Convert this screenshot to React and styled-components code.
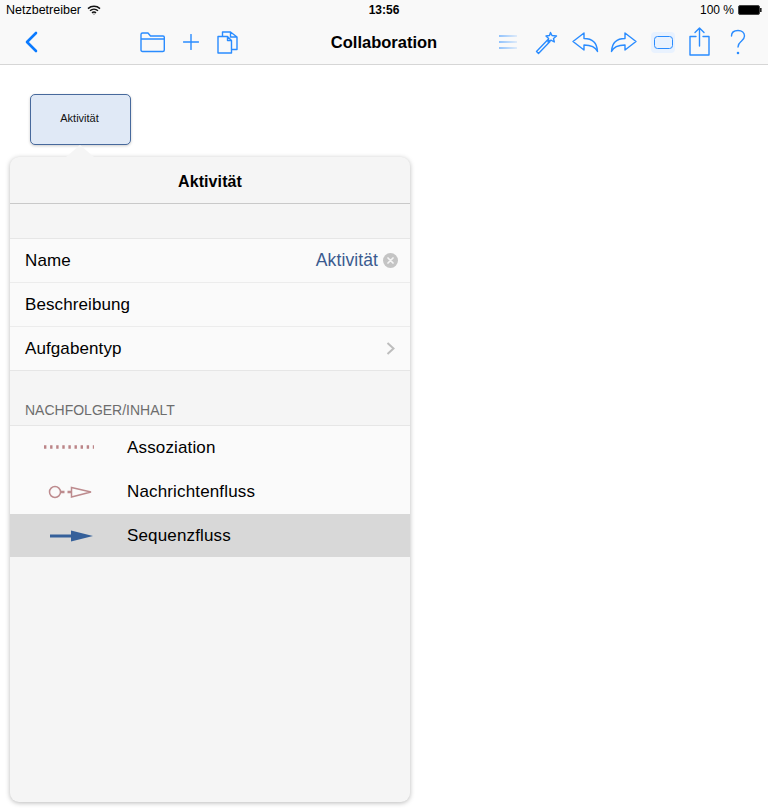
import React from 'react';
import styled, { createGlobalStyle } from 'styled-components';

const GlobalStyle = createGlobalStyle`
  html, body {
    margin: 0;
    background: #fff;
    font-family: "Liberation Sans", Arial, sans-serif;
    color: #000;
  }
`;

const Page = styled.div`
  position: relative;
  width: 768px;
  height: 808px;
  overflow: hidden;
  background: #fff;
`;

const Header = styled.header`
  height: 64px;
  background: #f9f9f9;
  border-bottom: 1px solid #d6d6d6;
  box-sizing: content-box;
`;

const StatusBar = styled.div`
  height: 20px;
  padding: 0 6px;
  display: grid;
  grid-template-columns: 1fr auto 1fr;
  align-items: center;
  font-size: 12.5px;
`;

const StatusLeft = styled.div`
  display: flex;
  align-items: center;
  gap: 6px;
`;

const StatusTime = styled.div`
  font-size: 12px;
  font-weight: 700;
`;

const StatusRight = styled.div`
  display: flex;
  justify-content: flex-end;
  align-items: center;
  gap: 4px;
  font-size: 12px;
`;

const Toolbar = styled.div`
  height: 44px;
  display: grid;
  grid-template-columns: 1fr auto 1fr;
  align-items: center;
`;

const ToolLeft = styled.div`
  display: flex;
  align-items: center;
  padding-left: 24px;
`;

const ToolGroup = styled.div`
  display: flex;
  align-items: center;
  gap: ${({ $gap }) => $gap}px;
  margin-left: ${({ $offset }) => $offset || 0}px;
`;

const ToolRight = styled.div`
  display: flex;
  align-items: center;
  justify-content: flex-end;
  gap: 14px;
  padding-right: 22px;
`;

const Title = styled.div`
  font-size: 16.5px;
  font-weight: 700;
`;

const Icon = styled.svg`
  display: block;
  flex: none;
  fill: none;
  stroke: #2a8cff;
  stroke-width: 1.4;
  stroke-linecap: round;
  stroke-linejoin: round;
`;

const BackIcon = styled(Icon)`
  stroke: #0a7aff;
  stroke-width: 2.6;
`;

const ListIcon = styled(Icon)`
  margin-right: 4px;
  stroke-linecap: butt;
  stroke-width: 1.2;
`;

const UndoIcon = styled(Icon)`
  margin-right: -3px;
`;

const ShareIcon = styled(Icon)`
  margin-top: -2px;
`;

const HelpIcon = styled(Icon)`
  margin-left: 6px;
`;

const RectToggle = styled.div`
  width: 24px;
  height: 21px;
  display: flex;
  align-items: center;
  justify-content: center;
  background: #e9f2fe;
  border-radius: 4px;
`;

const RectShape = styled.div`
  width: 19px;
  height: 13px;
  box-sizing: border-box;
  border: 1.4px solid #2a8cff;
  border-radius: 3.5px;
`;

const Node = styled.div`
  position: absolute;
  left: 30px;
  top: 94px;
  width: 101px;
  height: 51px;
  box-sizing: border-box;
  display: flex;
  align-items: center;
  justify-content: center;
  padding: 0 2px 3px 0;
  background: #e0e9f6;
  border: 1px solid #47699c;
  border-radius: 5px;
  box-shadow: 0 1px 3px rgba(0, 0, 0, 0.2);
  font-size: 11px;
  color: #111;
`;

const Popover = styled.section`
  position: absolute;
  left: 10px;
  top: 157px;
  width: 400px;
  height: 645px;
  background: #f5f5f5;
  border-radius: 9px;
  box-shadow: 0 1px 5px rgba(0, 0, 0, 0.28);
`;

const Arrow = styled.div`
  position: absolute;
  left: 56px;
  top: -12px;
  width: 0;
  height: 0;
  border-left: 14px solid transparent;
  border-right: 14px solid transparent;
  border-bottom: 12px solid #f5f5f5;
`;

const PopTitle = styled.div`
  height: 47px;
  box-sizing: border-box;
  padding-top: 4px;
  display: flex;
  align-items: center;
  justify-content: center;
  border-bottom: 1px solid #c9c9c9;
  font-size: 16px;
  letter-spacing: 0.1px;
  font-weight: 700;
`;

const Spacer = styled.div`
  height: 34px;
`;

const Group = styled.div`
  background: #fafafa;
  border-top: 1px solid #e6e6e6;
  border-bottom: 1px solid #e6e6e6;
`;

const Row = styled.div`
  height: ${({ $first }) => ($first ? 43 : 44)}px;
  box-sizing: border-box;
  display: flex;
  align-items: center;
  padding: 0 12px 0 15px;
  font-size: 17px;
  letter-spacing: 0.1px;
  border-top: ${({ $first }) => ($first ? 'none' : '1px solid #ececec')};
`;

const RowLabel = styled.div`
  flex: 1;
`;

const RowValue = styled.div`
  color: #3b5a8f;
  font-size: 17.5px;
  margin-right: 5px;
`;

const ClearBadge = styled.div`
  width: 15px;
  height: 15px;
  border-radius: 50%;
  background: #c4c4c4;
  display: flex;
  align-items: center;
  justify-content: center;
`;

const Chevron = styled.svg`
  margin-right: 3px;
  fill: none;
  stroke: #bdbdbd;
  stroke-width: 2;
`;

const SectionLabel = styled.div`
  height: 54px;
  box-sizing: border-box;
  padding: 31px 15px 0;
  font-size: 14px;
  line-height: 16px;
  color: #6d6d6d;
`;

const FlowGroup = styled.div`
  background: #fafafa;
  border-top: 1px solid #e6e6e6;
`;

const FlowRow = styled.div`
  height: ${({ $selected }) => ($selected ? 43 : 44)}px;
  display: flex;
  align-items: center;
  font-size: 17px;
  letter-spacing: 0.15px;
  background: ${({ $selected }) => ($selected ? '#d8d8d8' : 'transparent')};
`;

const FlowIconCell = styled.div`
  width: 117px;
  box-sizing: border-box;
  display: flex;
  justify-content: center;
  padding-left: ${({ $shift }) => $shift}px;
`;

const Wifi = () => (
  <svg width="14" height="10" viewBox="0 0 14 10" fill="none" stroke="#111" strokeWidth="1.5">
    <path d="M1 3.6c3.4-3 8.6-3 12 0M3 5.8c2.3-2 5.7-2 8 0M5 7.8c1.2-.9 2.8-.9 4 0" />
    <circle cx="7" cy="9" r=".6" fill="#111" stroke="none" />
  </svg>
);

const Battery = () => (
  <svg width="24" height="10" viewBox="0 0 24 10">
    <rect x="0.5" y="0.5" width="21" height="9" rx="1.5" fill="#000" stroke="#444" strokeWidth="1" />
    <rect x="22" y="3" width="1.6" height="4" fill="#222" />
  </svg>
);

const App = () => (
  <Page>
    <GlobalStyle />
    <Header>
      <StatusBar>
        <StatusLeft>Netzbetreiber <Wifi /></StatusLeft>
        <StatusTime>13:56</StatusTime>
        <StatusRight>100 % <Battery /></StatusRight>
      </StatusBar>
      <Toolbar>
        <ToolLeft>
          <BackIcon width="14" height="22" viewBox="0 0 14 22">
            <path d="M12 2 3 11l9 9" />
          </BackIcon>
          <ToolGroup $gap={18} $offset={102}>
            <Icon width="25" height="22" viewBox="0 0 25 22">
              <path d="M1 5V3.500C1 2.500 1.600 2 2.500 2h5.500l2.500 3H23c.8 0 1.300.5 1.300 1.300V19c0 1-.6 1.500-1.500 1.500H2.500C1.500 20.500 1 20 1 19zM1 8h23.300" />
            </Icon>
            <Icon width="16" height="16" viewBox="0 0 16 16">
              <path d="M8 .5v15M.5 8h15" />
            </Icon>
            <Icon width="21" height="24" viewBox="0 0 21 24">
              <path d="M1 6.500h9.500l4 4V23H1zM10.500 6.500v4h4M5.500 6.500V2h8l6.500 5v12.500h-5.500M13.500 2v5H20" />
            </Icon>
          </ToolGroup>
        </ToolLeft>
        <Title>Collaboration</Title>
        <ToolRight>
          <ListIcon width="18" height="14" viewBox="0 0 18 14">
            <defs>
              <linearGradient id="listFade" gradientUnits="userSpaceOnUse" x1="0" y1="0" x2="18" y2="0">
                <stop offset="0" stopColor="#2a8cff" />
                <stop offset="1" stopColor="#2a8cff" stopOpacity="0.25" />
              </linearGradient>
            </defs>
            <path stroke="url(#listFade)" d="M0 1h18M0 7h18M0 13h18" />
          </ListIcon>
          <Icon width="23" height="25" viewBox="0 0 23 25">
            <path d="m1.500 21.500 2 2L15 11.500l-2-2zM15.500 2.500l1.500 3 4.500.5-3 2.500.8 3.500-3.300-1.800-3 1.800.6-3.500-2.600-2.500 3.500-.5z" />
          </Icon>
          <UndoIcon width="27" height="22" viewBox="0 0 27 22">
            <path d="M1 10.500 12 2v5.500c8 0 13 4 13.500 13-2-4.500-6-6.500-13.500-6.500v5z" />
          </UndoIcon>
          <Icon width="27" height="22" viewBox="0 0 27 22">
            <path d="M26 10.500 15 2v5.500c-8 0-13 4-13.500 13 2-4.500 6-6.500 13.500-6.500v5z" />
          </Icon>
          <RectToggle><RectShape /></RectToggle>
          <ShareIcon width="21" height="29" viewBox="0 0 21 29">
            <path d="M7 9.500H1v18.500h19V9.500h-6M10.500 19V1.500M6 5.500l4.500-4.500 4.500 4.500" />
          </ShareIcon>
          <HelpIcon width="16" height="26" viewBox="0 0 16 26">
            <path d="M1.500 7C1.500 3.500 4 1.500 8 1.500s6.500 2.300 6.500 5.500c0 2.800-1.700 4-3.500 5.500-1.700 1.400-3 2.600-3 5.500" />
            <circle cx="8" cy="24" r=".6" />
          </HelpIcon>
        </ToolRight>
      </Toolbar>
    </Header>

    <Node>Aktivität</Node>

    <Popover>
      <Arrow />
      <PopTitle>Aktivität</PopTitle>
      <Spacer />
      <Group>
        <Row $first>
          <RowLabel>Name</RowLabel>
          <RowValue>Aktivität</RowValue>
          <ClearBadge>
            <svg width="7" height="7" viewBox="0 0 7 7" stroke="#f5f5f5" strokeWidth="1.7" strokeLinecap="round">
              <path d="m1 1 5 5M6 1 1 6" />
            </svg>
          </ClearBadge>
        </Row>
        <Row><RowLabel>Beschreibung</RowLabel></Row>
        <Row>
          <RowLabel>Aufgabentyp</RowLabel>
          <Chevron width="9" height="13" viewBox="0 0 9 13">
            <path d="m1.500 1 6 5.500-6 5.500" />
          </Chevron>
        </Row>
      </Group>
      <SectionLabel>NACHFOLGER/INHALT</SectionLabel>
      <FlowGroup>
        <FlowRow>
          <FlowIconCell $shift={0}>
            <svg width="50" height="8" viewBox="0 0 50 8">
              <line x1="0" y1="3" x2="50" y2="3" stroke="#bb8487" strokeWidth="3.4" strokeDasharray="2.4 3.7" />
            </svg>
          </FlowIconCell>
          Assoziation
        </FlowRow>
        <FlowRow>
          <FlowIconCell $shift={3}>
            <svg width="44" height="16" viewBox="0 0 44 16" fill="none" stroke="#bd8b8e" strokeWidth="1.5">
              <circle cx="7" cy="8" r="5.500" />
              <path d="M13 8h3.500M19.500 8h4" strokeWidth="2.400" />
              <path d="M23.500 3.500 43 8l-19.500 5z" />
            </svg>
          </FlowIconCell>
          Nachrichtenfluss
        </FlowRow>
        <FlowRow $selected>
          <FlowIconCell $shift={7}>
            <svg width="44" height="12" viewBox="0 0 44 12">
              <path d="M0 6h22" stroke="#35609a" strokeWidth="2.800" strokeLinecap="round" />
              <path d="M21 .5 43 6 21 11.500z" fill="#35609a" />
            </svg>
          </FlowIconCell>
          Sequenzfluss
        </FlowRow>
      </FlowGroup>
    </Popover>
  </Page>
);

export default App;
